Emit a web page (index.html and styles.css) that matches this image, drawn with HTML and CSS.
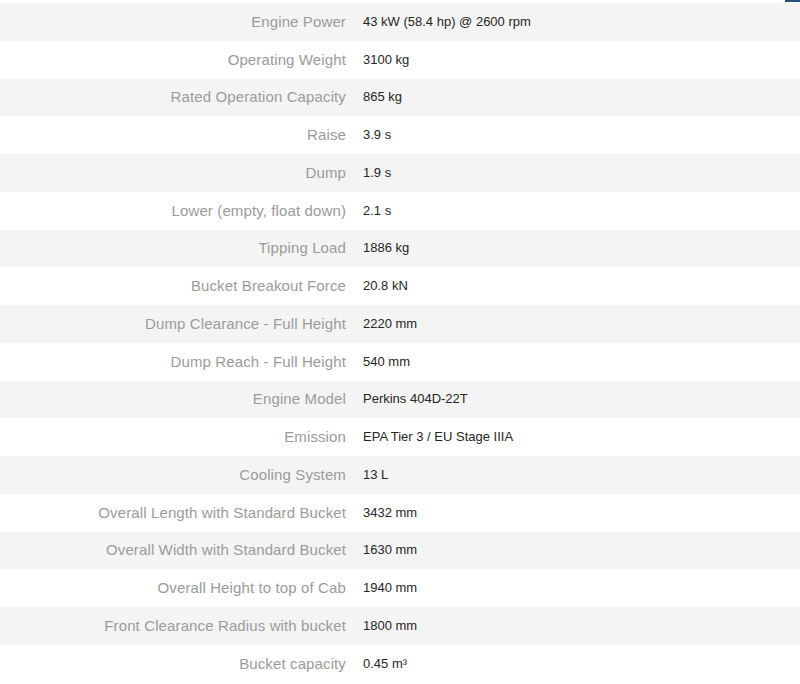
FILE: index.html
```html
<!DOCTYPE html>
<html>
<head>
<meta charset="utf-8">
<link rel="stylesheet" href="styles.css">
</head>
<body>
<div class="corner"></div>
<div class="specs">
  <div class="row"><div class="label">Engine Power</div><div class="value">43 kW (58.4 hp) @ 2600 rpm</div></div>
  <div class="row"><div class="label">Operating Weight</div><div class="value">3100 kg</div></div>
  <div class="row"><div class="label">Rated Operation Capacity</div><div class="value">865 kg</div></div>
  <div class="row"><div class="label">Raise</div><div class="value">3.9 s</div></div>
  <div class="row"><div class="label">Dump</div><div class="value">1.9 s</div></div>
  <div class="row"><div class="label">Lower (empty, float down)</div><div class="value">2.1 s</div></div>
  <div class="row"><div class="label">Tipping Load</div><div class="value">1886 kg</div></div>
  <div class="row"><div class="label">Bucket Breakout Force</div><div class="value">20.8 kN</div></div>
  <div class="row"><div class="label">Dump Clearance - Full Height</div><div class="value">2220 mm</div></div>
  <div class="row"><div class="label">Dump Reach - Full Height</div><div class="value">540 mm</div></div>
  <div class="row"><div class="label">Engine Model</div><div class="value">Perkins 404D-22T</div></div>
  <div class="row"><div class="label">Emission</div><div class="value">EPA Tier 3 / EU Stage IIIA</div></div>
  <div class="row"><div class="label">Cooling System</div><div class="value">13 L</div></div>
  <div class="row"><div class="label">Overall Length with Standard Bucket</div><div class="value">3432 mm</div></div>
  <div class="row"><div class="label">Overall Width with Standard Bucket</div><div class="value">1630 mm</div></div>
  <div class="row"><div class="label">Overall Height to top of Cab</div><div class="value">1940 mm</div></div>
  <div class="row"><div class="label">Front Clearance Radius with bucket</div><div class="value">1800 mm</div></div>
  <div class="row"><div class="label">Bucket capacity</div><div class="value">0.45 m³</div></div>
</div>
</body>
</html>
```
FILE: styles.css
```css
html, body {
  margin: 0;
  padding: 0;
  background: #ffffff;
  overflow: hidden;
}
body {
  position: relative;
  width: 800px;
  height: 684px;
  font-family: "Liberation Sans", Arial, sans-serif;
}
.corner {
  position: absolute;
  top: 0;
  right: 0;
  width: 15px;
  height: 2px;
  background: #24507c;
}
.specs {
  padding-top: 3px;
  display: flex;
  flex-direction: column;
}
.row {
  display: flex;
  align-items: center;
  height: 37.75px;
  background: #ffffff;
}
.row:nth-child(odd) {
  background: #f4f4f4;
}
.label {
  width: 346px;
  margin-top: -1px;
  text-align: right;
  font-size: 15px;
  letter-spacing: 0.12px;
  color: #9b9b9b;
  white-space: nowrap;
}
.value {
  padding-left: 17px;
  margin-top: -1px;
  font-size: 13px;
  color: #262626;
  white-space: nowrap;
}
```
